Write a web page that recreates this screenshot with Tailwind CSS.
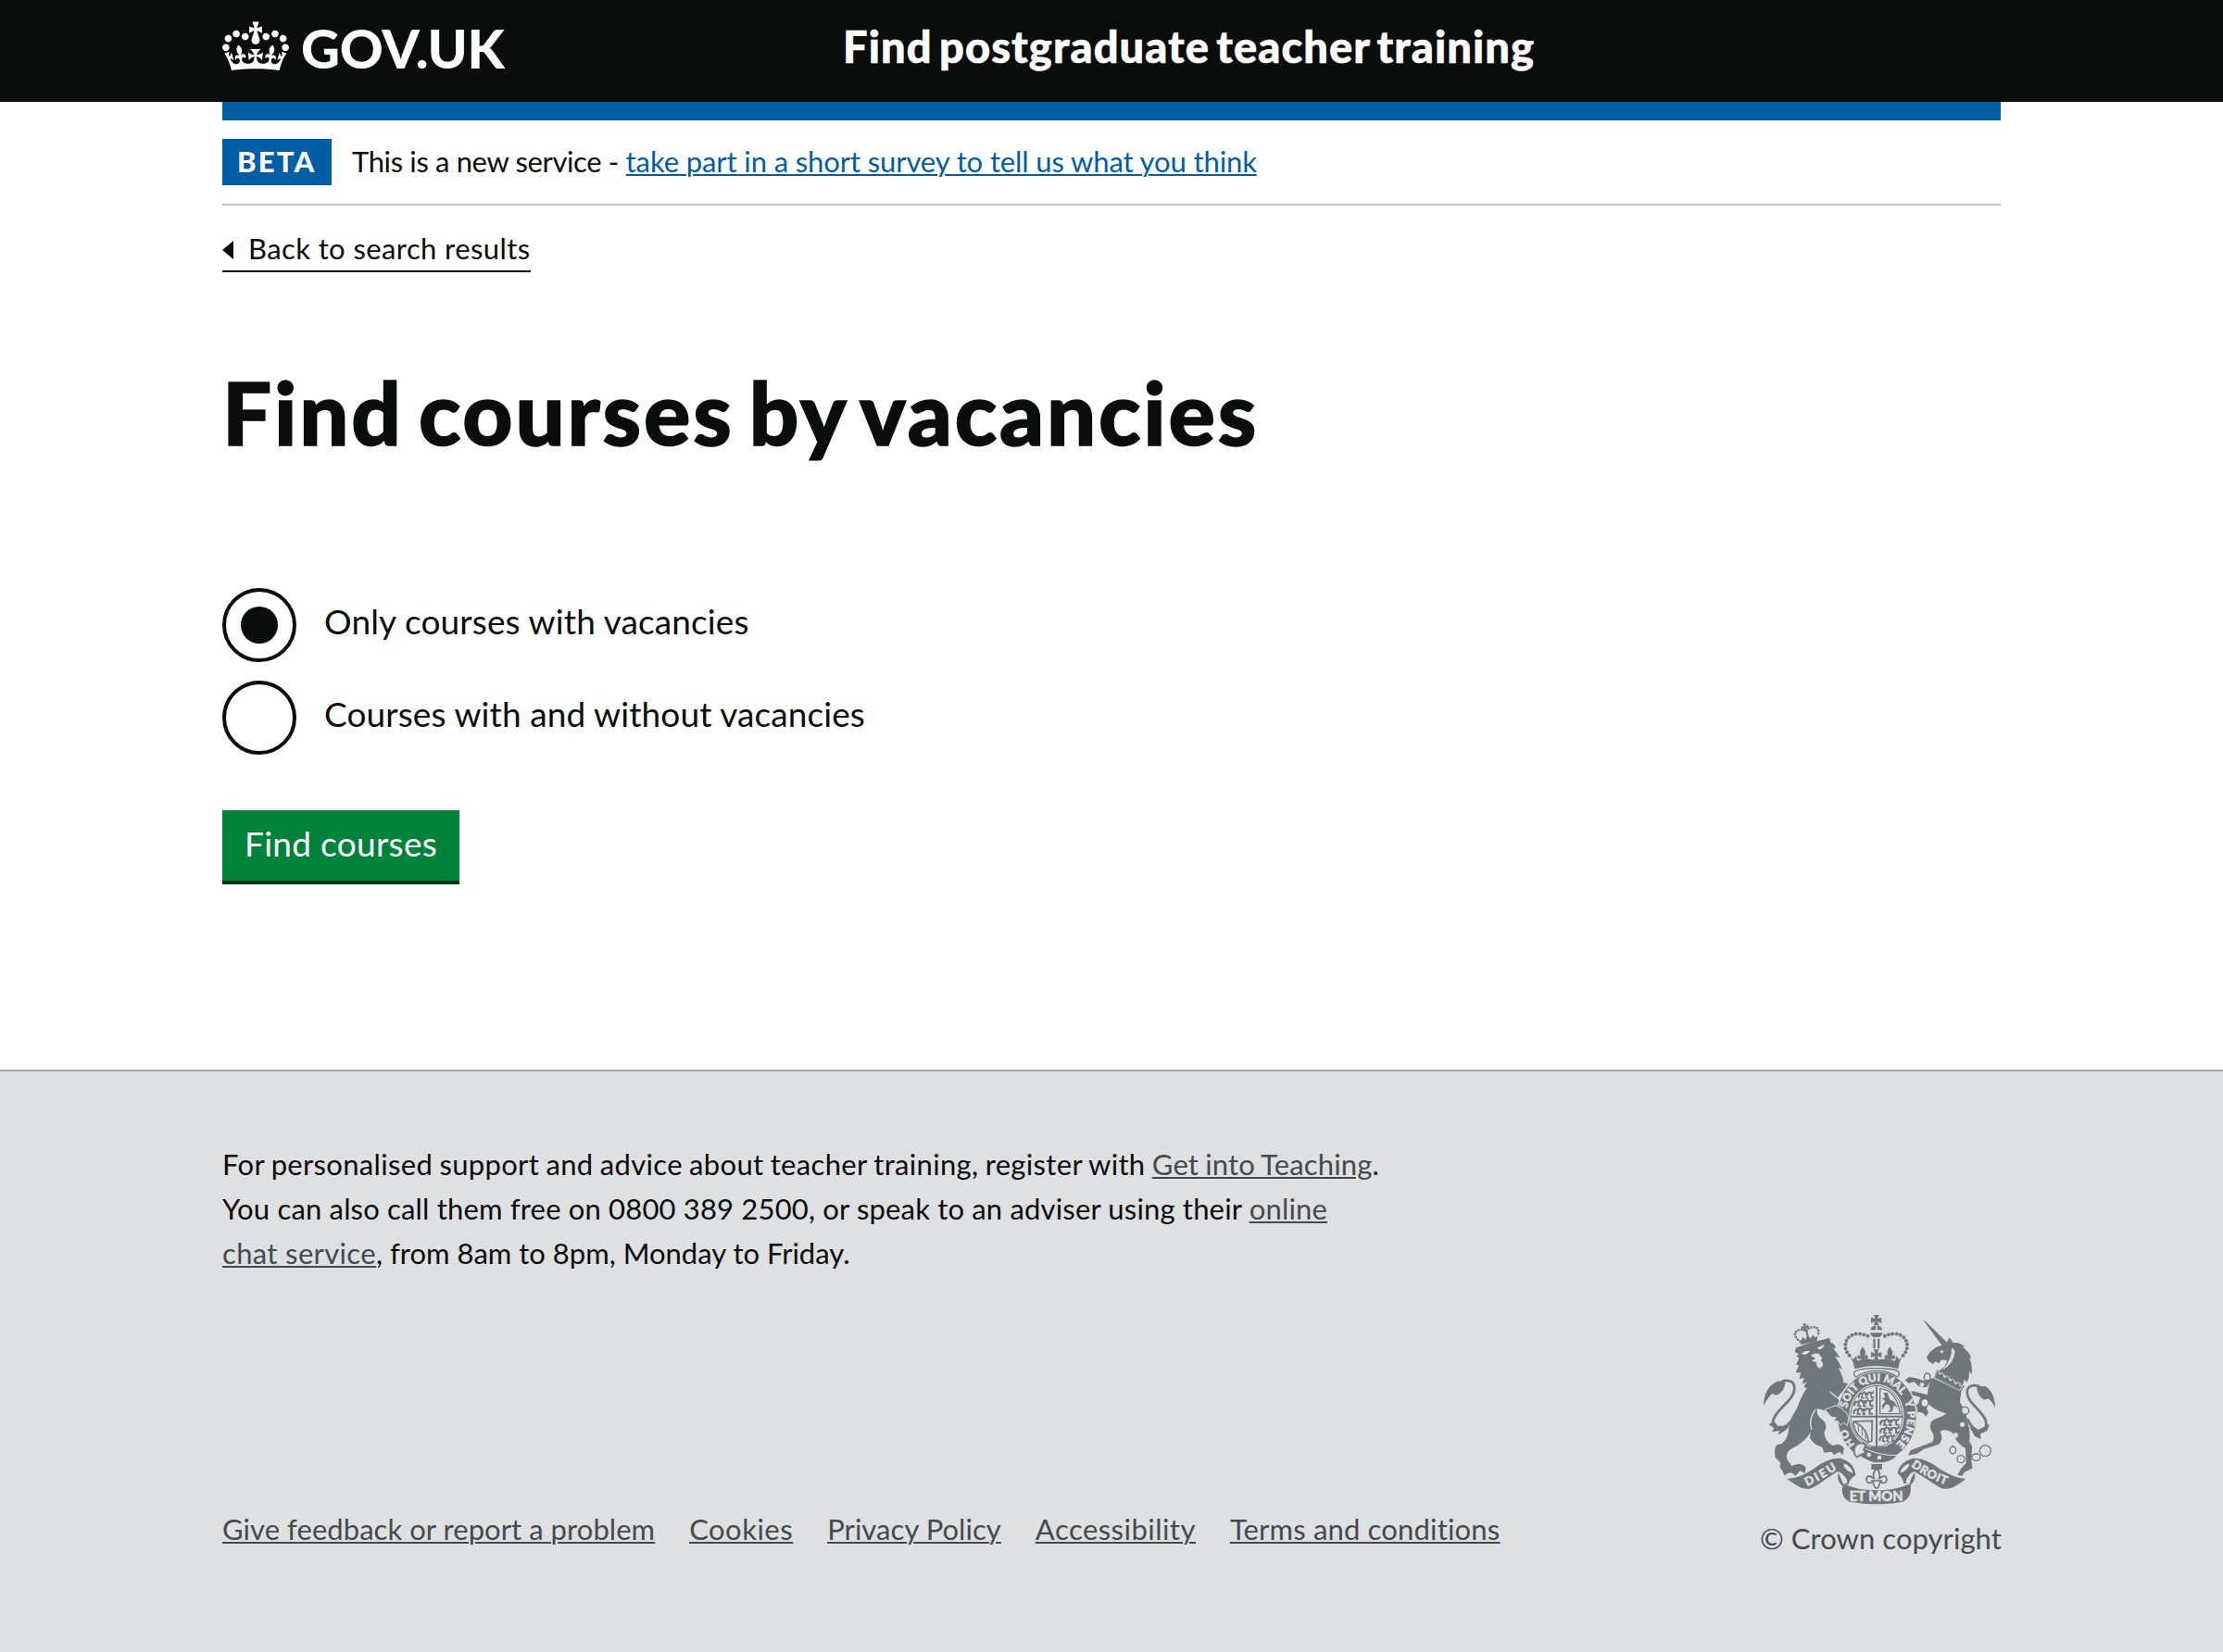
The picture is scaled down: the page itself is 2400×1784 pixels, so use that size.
<!DOCTYPE html>
<html lang="en">
<head>
<meta charset="utf-8">
<title>Find courses by vacancies</title>
<script src="https://cdn.jsdelivr.net/npm/@tailwindcss/browser@4"></script>
</head>
<body class="min-h-screen flex flex-col bg-white text-[#0b0c0c] font-['Lato','Liberation_Sans',sans-serif] text-[31px]">

<header class="bg-[#0b0c0c] text-white h-[110px] px-[240px]">
  <div class="flex items-start">
    <a class="flex items-start w-[670px] pt-[22px]">
      <svg class="w-[72px] h-[54px] mt-px" viewBox="0 0 132 97" fill="currentColor"><path fill-rule="evenodd" d="M25 30.2c3.5 1.5 7.7-.2 9.1-3.7 1.5-3.6-.2-7.8-3.9-9.2-3.6-1.4-7.6.3-9.1 3.9-1.4 3.5.3 7.5 3.9 9zM9 39.5c3.6 1.5 7.8-.2 9.2-3.7 1.5-3.6-.2-7.8-3.9-9.1-3.6-1.5-7.6.2-9.1 3.8-1.4 3.5.3 7.5 3.8 9zM4.4 57.2c3.5 1.5 7.7-.2 9.1-3.8 1.5-3.6-.2-7.7-3.9-9.1-3.5-1.5-7.6.3-9.1 3.8-1.4 3.5.3 7.6 3.9 9.1zm38.3-21.4c3.5 1.5 7.7-.2 9.1-3.8 1.5-3.6-.2-7.7-3.9-9.1-3.6-1.5-7.6.3-9.1 3.8-1.3 3.6.4 7.7 3.9 9.1zm64.4-5.6c-3.6 1.5-7.8-.2-9.1-3.7-1.5-3.6.2-7.8 3.8-9.2 3.6-1.4 7.7.3 9.2 3.9 1.3 3.5-.4 7.5-3.9 9zm15.9 9.3c-3.6 1.5-7.7-.2-9.1-3.7-1.5-3.6.2-7.8 3.7-9.1 3.6-1.5 7.7.2 9.2 3.8 1.5 3.5-.3 7.5-3.8 9zm4.7 17.7c-3.6 1.5-7.8-.2-9.2-3.8-1.5-3.6.2-7.7 3.9-9.1 3.6-1.5 7.7.3 9.2 3.8 1.3 3.5-.4 7.6-3.9 9.1zM89.3 35.8c-3.6 1.5-7.8-.2-9.2-3.8-1.4-3.6.2-7.7 3.9-9.1 3.6-1.5 7.7.3 9.2 3.8 1.4 3.6-.3 7.7-3.9 9.1zM69.7 17.7l8.9 4.7V9.3l-8.9 2.8c-.2-.3-.5-.6-.9-.9L72.4 0H59.6l3.5 11.2c-.3.3-.6.5-.9.9l-8.8-2.8v13.1l8.8-4.7c.3.3.6.7.9.9l-5 15.4v.1c-.2.8-.4 1.6-.4 2.4 0 4.1 3.1 7.5 7 8.1h.2c.3 0 .7.1 1 .1.4 0 .7 0 1-.1h.2c4-.6 7.1-4.1 7.1-8.1 0-.8-.1-1.7-.4-2.4V34l-5.1-15.4c.4-.2.7-.6 1-.9zM66 92.8c16.9 0 32.8 1.1 47.1 3.2 4-16.9 8.9-26.7 14-33.5l-9.6-3.4c1 4.9 1.1 7.2 0 10.2-1.5-1.4-3-4.3-4.2-8.7L108.6 76c2.8-2 5-3.2 7.5-3.3-4.4 9.4-10 11.9-13.6 11.2-4.3-.8-6.3-4.6-5.6-7.9 1-4.7 5.7-5.9 8-.5 4.3-8.7-3-11.4-7.6-8.8 7.1-7.2 7.9-13.5 2.1-21.1-8 6.1-8.1 12.3-4.5 20.8-4.7-5.4-12.1-2.5-9.5 6.2 3.4-5.2 7.9-2 7.2 3.1-.6 4.3-6.4 7.8-13.5 7.2-10.3-.9-10.9-8-11.2-13.8 2.5-.5 7.1 1.8 11 7.3L80.2 60c-4.1 4.4-8 5.3-12.3 5.4 1.4-4.4 8-11.6 8-11.6H55.5s6.4 7.2 7.9 11.6c-4.2-.1-8-1-12.3-5.4l1.4 16.4c3.9-5.5 8.5-7.7 10.9-7.3-.3 5.8-.9 12.8-11.1 13.8-7.2.6-12.9-2.9-13.5-7.2-.7-5 3.8-8.3 7.1-3.1 2.7-8.7-4.6-11.6-9.4-6.2 3.7-8.5 3.6-14.7-4.6-20.8-5.8 7.6-5 13.9 2.2 21.1-4.7-2.6-11.9.1-7.7 8.8 2.3-5.5 7.1-4.2 8.1.5.7 3.3-1.3 7.1-5.7 7.9-3.5.7-9-1.8-13.5-11.2 2.5.1 4.7 1.3 7.5 3.3l-4.7-15.4c-1.2 4.4-2.7 7.2-4.3 8.7-1.1-3-.9-5.3 0-10.2l-9.5 3.4c5 6.9 9.9 16.7 14 33.5 14.8-2.1 30.8-3.2 47.7-3.2z"/></svg>
      <span class="ml-[13px] font-black text-[58px] leading-[60px] tracking-[-0.2px]">GOV.UK</span>
    </a>
    <a class="pt-5 font-black text-[47px] leading-[60px] tracking-[1.1px] [word-spacing:-5px] [-webkit-text-stroke:0.6px_currentColor] whitespace-nowrap">Find postgraduate teacher training</a>
  </div>
</header>

<div class="mx-[240px]">
  <div class="h-5 bg-[#005ea5]"></div>
  <div class="flex items-center py-5 border-b-2 border-[#bfc1c3] leading-[48px] whitespace-nowrap">
    <strong class="flex items-center h-[50px] w-[118px] pl-4 bg-[#005ea5] text-white font-black tracking-[2.2px] leading-[48px]"><span class="mb-[2px]">BETA</span></strong>
    <span class="ml-[22px] mb-[2px] tracking-[-0.36px]">This is a new service - <a class="text-[#005ea5] underline decoration-2 underline-offset-2 tracking-[-0.11px]">take part in a short survey to tell us what you think</a></span>
  </div>
  <a class="mt-[22px] inline-flex items-center h-[50px] border-b-2 border-[#0b0c0c] leading-[48px] tracking-[0.4px]">
    <svg class="w-3 h-5 mr-4 mt-[3px]" viewBox="0 0 12 20"><path d="M0 10 12 0v20z" fill="#0b0c0c"/></svg>Back to search results</a>
</div>

<main class="mx-[240px] flex flex-col items-start">
  <h1 class="mt-[101px] font-black text-[94px] leading-[100px] tracking-[2.8px] [word-spacing:-9px] [-webkit-text-stroke:1.5px_currentColor]">Find courses by vacancies</h1>
  <div class="mt-[140px] flex flex-col gap-5 text-[37px] leading-[72px]">
    <label class="flex h-20">
      <span class="size-20 mr-[30px] rounded-full border-4 border-[#0b0c0c] flex items-center justify-center"><span class="size-10 rounded-full bg-[#0b0c0c]"></span></span>
      <span class="tracking-[0.13px]">Only courses with vacancies</span>
    </label>
    <label class="flex h-20">
      <span class="size-20 mr-[30px] rounded-full border-4 border-[#0b0c0c]"></span>
      <span class="tracking-[0.1px]">Courses with and without vacancies</span>
    </label>
  </div>
  <button class="mt-[60px] w-64 h-20 pl-6 pb-1 text-left bg-[#00823b] border-b-4 border-[#003618] text-white text-[37px] leading-[72px] tracking-[0.3px]">Find courses</button>
</main>

<footer class="mt-[200px] flex-1 bg-[#dee0e2] border-t-2 border-[#a1acb2] px-[240px] pt-[76px] leading-[48px] whitespace-nowrap">
  <p>
    <span class="tracking-[0.33px] [word-spacing:-1px]">For personalised support and advice about teacher training, register with <a class="text-[#454a4d] underline decoration-2 underline-offset-2 tracking-[0.15px]">Get into Teaching</a>.</span><br>
    <span class="tracking-[0.17px]">You can also call them free on 0800 389 2500, or speak to an adviser using their <a class="text-[#454a4d] underline decoration-2 underline-offset-2">online</a></span><br>
    <a class="text-[#454a4d] underline decoration-2 underline-offset-2 tracking-[0.35px]">chat service</a>, from 8am to 8pm, Monday to Friday.
  </p>
  <div class="mt-10 flex items-end justify-between text-[#454a4d]">
    <nav class="flex gap-[37px] pb-[10px] underline decoration-2 underline-offset-2">
      <a class="tracking-[0.05px]">Give feedback or report a problem</a>
      <a class="tracking-[0.5px]">Cookies</a>
      <a class="tracking-[0.05px]">Privacy Policy</a>
      <a class="tracking-[0.47px]">Accessibility</a>
      <a class="tracking-[0.17px]">Terms and conditions</a>
    </nav>
    <div class="w-[260px]">
      <svg class="block w-[260px] h-[210px] mb-[10px]" viewBox="60 50 780 630" fill="#6f777b" font-family="Lato, sans-serif">
        <defs>
          <g id="patty"><path d="M-9-17H9L3-4 17-9V9L3 4 9 17H-9L-3 4-17 9V-9L-3-4Z"/></g>
          <g id="fleur"><path d="M0-22Q-16-2-4 10Q-18-2-17 14Q-12 22-4 16V26H4V16Q12 22 17 14Q18-2 4 10Q16-2 0-22Z"/></g>
          <g id="beast"><path d="M-32 6L-24-4-16-4-10-9 2-4 14-8 24-5 32-11M-27-4-30 10M-14-4-18 9-8 11M4-5 0 9 8 11M20-5 22 9 32 9M-6-2 10-1" fill="none" stroke="#6f777b" stroke-width="6"/></g>
        </defs>

        <!-- lion -->
        <g transform="rotate(-12 213 125)">
          <path d="M181 132 188 150H240L247 132 237 138 231 127 222 138 214 123 206 138 197 127 191 138Z"/>
          <path d="M180 132Q166 106 190 103Q204 101 213 112Q222 101 236 103Q260 106 248 132" fill="none" stroke="#6f777b" stroke-width="8" stroke-linecap="round" stroke-dasharray="0 9.5"/>
          <use href="#patty" transform="translate(212 98) scale(.7)"/>
          <path d="M211 106H217V130H211Z"/>
        </g>
        <path d="M181 164Q225 146 262 140L285 133 290 150Q303 152 306 167L297 166Q308 180 320 198L303 193Q318 212 327 235L314 230Q330 258 331 278L346 281 332 302Q318 316 312 330L326 350Q345 372 347 397L341 417 332 408 322 416 312 402 300 402 306 391 290 390 297 378 281 378 287 366 270 369 245 362Q243 386 262 398Q283 416 268 440Q270 468 295 482Q322 472 333 492L328 513 318 502 300 513 292 502 268 505 262 488Q235 480 222 458L224 438Q210 470 160 494Q140 508 150 530L164 548Q192 534 209 553L206 571 190 564 176 580 162 570 148 573 141 580 132 562 124 552 127 538 110 520Q104 484 119 478Q138 480 150 448Q158 390 180 362Q194 322 212 296L202 292 213 276 197 283 204 262 188 266 192 246 176 246 186 222 177 220 187 200 178 192 187 188 173 178 177 165Z"/>
        <path d="M194 184Q206 172 222 176Q214 188 204 187ZM244 166 268 155Q266 168 254 171ZM224 190Q240 180 252 186L262 199 257 206Q266 214 264 224L254 233 244 224 243 212 228 208 240 200Z" fill="#dee0e2"/>
        <path d="M286 308 344 352M228 430Q216 400 240 366" fill="none" stroke="#dee0e2" stroke-width="4"/>
        <path d="M130 274C180 260 182 306 152 338C118 372 92 400 106 418C120 436 154 424 172 384" fill="none" stroke="#6f777b" stroke-width="8"/>
        <path d="M72 354Q74 290 120 273L143 277Q138 310 113 319L100 314Q84 328 72 354ZM89 414 104 402 118 418 156 418Q142 438 118 446L124 434 100 438 106 426Z"/>

        <!-- unicorn -->
        <path d="M588 75 597 80 670 152 660 163 650 158Z"/>
        <path d="M600 196 612 178 634 162 662 154 674 132 686 150Q705 146 724 162L716 163Q740 178 744 200L738 198Q750 225 746 252L738 240Q740 262 730 278L722 268 718 285 640 240Q664 226 666 206L648 204 640 216 628 210 620 218 606 208Z"/>
        <path d="M642 176 656 174 650 184ZM682 164 692 176Q690 216 650 238Q682 206 682 164Z" fill="#dee0e2"/>
        <path d="M634 238 720 290 710 306 626 262Z" fill="#dee0e2" stroke="#6f777b" stroke-width="4"/>
        <path d="M620 264 712 308 708 342Q728 372 732 402Q744 440 738 468L747 484 745 530 748 556 722 568 716 580 700 578 712 556 728 540 726 492Q694 472 684 440Q660 426 644 436Q656 462 640 478L590 494 570 508 540 514 548 498 580 486 620 470Q628 446 614 432Q604 404 632 394Q654 388 664 378Q632 372 606 348L600 362 606 376 598 388 588 376 566 372 556 352 572 348 580 326 560 320 548 326 538 310 556 306 604 318Q602 290 616 276L598 294 574 290 560 276 542 280 530 270 544 260 566 264 590 272Z"/>
        <path d="M626 262 634 236 642 252 650 247 658 262 668 257 676 273 686 268 694 284 704 278 708 290 720 286 706 304Q668 282 626 262Z" stroke="#dee0e2" stroke-width="2"/>
        <g fill="#dee0e2" stroke="#6f777b" stroke-width="4">
          <ellipse cx="602" cy="260" rx="10" ry="12"/><ellipse cx="594" cy="344" rx="12" ry="13"/><circle cx="725" cy="369" r="12"/>
          <ellipse cx="685" cy="497" rx="10" ry="12" fill="none"/><circle cx="711" cy="526" r="12" fill="none"/><ellipse cx="760" cy="520" rx="14" ry="11" fill="none"/><circle cx="790" cy="499" r="18" fill="none"/>
        </g>
        <g fill="#dee0e2"><circle cx="585" cy="285" r="7"/><circle cx="716" cy="414" r="8"/><circle cx="694" cy="449" r="8"/></g>
        <path d="M772 290C722 276 722 318 752 350C782 382 804 404 788 430C776 448 748 430 732 396" fill="none" stroke="#6f777b" stroke-width="8"/>
        <path d="M822 362Q822 310 790 290L762 290Q764 322 786 334L800 330Q814 340 822 362ZM738 420 762 434 804 412 796 434 774 444 776 462 756 452Z"/>

        <!-- garter and shield -->
        <ellipse cx="439" cy="390" rx="132" ry="150" fill="#dee0e2"/>
        <path fill-rule="evenodd" d="M312 388A127 144 0 1 1 566 388A127 144 0 1 1 312 388ZM349 387A89 104 0 1 0 527 387A89 104 0 1 0 349 387Z"/>
        <path id="motto" d="M387 497A99 114 0 0 1 340 388A99 114 0 0 1 538 388A99 114 0 0 1 484 489" fill="none"/>
        <g font-size="35" font-weight="900" fill="#dee0e2" stroke="#dee0e2" stroke-width="1.5">
          <text><textPath href="#motto" startOffset="26" textLength="58">HO</textPath></text>
          <text><textPath href="#motto" startOffset="150" textLength="236">SOIT QUI MAL</textPath></text>
          <text><textPath href="#motto" startOffset="408" textLength="150">Y PENSE</textPath></text>
        </g>
        <ellipse cx="438" cy="387" rx="84" ry="99" fill="none" stroke="#6f777b" stroke-width="3"/>
        <path d="M435 288H441V486H435ZM354 385H524V391H354Z"/>
        <use href="#beast" transform="translate(404 318) scale(.8 1)"/><use href="#beast" transform="translate(396 344)"/><use href="#beast" transform="translate(394 370)"/>
        <use href="#beast" transform="translate(480 406)"/><use href="#beast" transform="translate(480 432)"/><use href="#beast" transform="translate(472 458) scale(.8 1)"/>
        <path d="M449 298Q500 300 515 379H449Z" fill="none" stroke="#6f777b" stroke-width="4"/>
        <path d="M460 310 474 312 480 332 496 340 506 360 494 352 488 372 474 374 482 366 480 352 468 348 458 366 456 352 466 338 456 330 466 326Z"/>
        <path d="M362 404 424 402 422 468 412 470Q406 420 362 404ZM362 404Q366 450 412 474" fill="none" stroke="#6f777b" stroke-width="5"/>
        <path d="M378 414 380 438M390 422 392 452M401 432 403 462" fill="none" stroke="#6f777b" stroke-width="3"/>
        <path d="M418 486H466L456 498H430Z"/>
        <path d="M368 500 382 480Q430 515 506 514Q480 544 430 538Q388 526 368 500Z" stroke="#dee0e2" stroke-width="3"/>
        <circle cx="413" cy="512" r="7" fill="#dee0e2"/><circle cx="447" cy="521" r="7" fill="#dee0e2"/>
        <path d="M366 492Q370 474 392 474L404 482 396 494 402 506 386 512 374 520Q362 510 366 492Z" fill="#dee0e2" stroke="#6f777b" stroke-width="5"/>
        <path d="M270 366 306 352Q338 364 348 392L343 418 332 408 322 416 312 403 300 404 306 391 292 390Z" stroke="#dee0e2" stroke-width="3"/>

        <!-- crown -->
        <path d="M372 260Q362 254 366 244Q376 232 437 232Q500 232 510 244Q514 254 504 260Q476 240 437 240Q400 240 372 260Z" fill="#dee0e2" stroke="#6f777b" stroke-width="4"/>
        <use href="#patty" transform="translate(437 76)"/>
        <path d="M418 108Q420 94 435 94V108ZM440 94Q455 94 457 108H440ZM417 117H458Q456 132 437 132Q419 132 417 117Z"/>
        <path d="M427 136H434V168H427ZM441 136H448V168H441Z"/>
        <path d="M350 190C326 166 334 120 380 120Q404 121 420 134" fill="none" stroke="#6f777b" stroke-width="12" stroke-linecap="round" stroke-dasharray="0 13"/>
        <path d="M524 190C548 166 540 120 494 120Q470 121 454 134" fill="none" stroke="#6f777b" stroke-width="12" stroke-linecap="round" stroke-dasharray="0 13"/>
        <use href="#patty" transform="translate(437 188)"/><use href="#fleur" transform="translate(393 184)"/><use href="#fleur" transform="translate(481 184)"/>
        <path d="M348 186 362 204 372 192 376 208Q406 196 437 206Q468 196 498 208L502 192 512 204 526 186Q512 206 508 234Q437 214 367 234Q362 206 348 186Z"/>

        <!-- motto scroll -->
        <path d="M148 590Q190 588 236 556Q284 520 322 524Q366 536 370 578Q350 590 346 610L336 608Q340 574 312 566Q280 586 246 610Q210 634 180 612Q164 602 148 590Z"/>
        <path d="M727 590Q686 586 640 556Q592 520 554 524Q512 536 506 572Q524 586 526 606L538 604Q536 574 560 566Q594 586 630 610Q664 634 696 612Q710 604 727 590Z"/>
        <path d="M352 568Q330 556 332 540Q356 548 362 572ZM524 568Q544 556 544 540Q520 548 514 570Z" fill="#dee0e2"/>
        <path d="M314 570Q308 600 328 612Q320 650 350 664Q437 680 524 664Q554 650 548 610Q566 596 562 570Q546 588 546 606Q500 628 437 627Q376 628 330 606Z"/>
        <path d="M326 576Q346 588 342 606L328 598ZM550 576Q530 588 534 604L548 596Z" fill="#dee0e2"/>
        <path id="dieu" d="M213 614Q262 592 322 550" fill="none"/><path id="droit" d="M549 549Q604 588 668 612" fill="none"/>
        <g fill="#dee0e2" font-weight="900" font-size="38" stroke="#dee0e2" stroke-width="1.5">
          <text><textPath href="#dieu" textLength="112">DIEU</textPath></text>
          <text><textPath href="#droit" textLength="128">DROIT</textPath></text>
          <text x="350" y="661" font-size="44" textLength="174">ET MON</text>
        </g>
        <path d="M421 542H456V560H421Z"/>
        <path d="M438 556Q422 572 431 590Q408 572 405 592Q408 610 426 600L430 612Q438 630 446 612L450 600Q468 610 471 592Q468 572 445 590Q454 572 438 556Z" fill="#dee0e2" stroke="#6f777b" stroke-width="5"/>
        <path d="M420 596H456" stroke="#6f777b" stroke-width="5"/>
      </svg>
      <a class="block whitespace-nowrap tracking-[0.05px]">© Crown copyright</a>
    </div>
  </div>
</footer>
</body>
</html>
